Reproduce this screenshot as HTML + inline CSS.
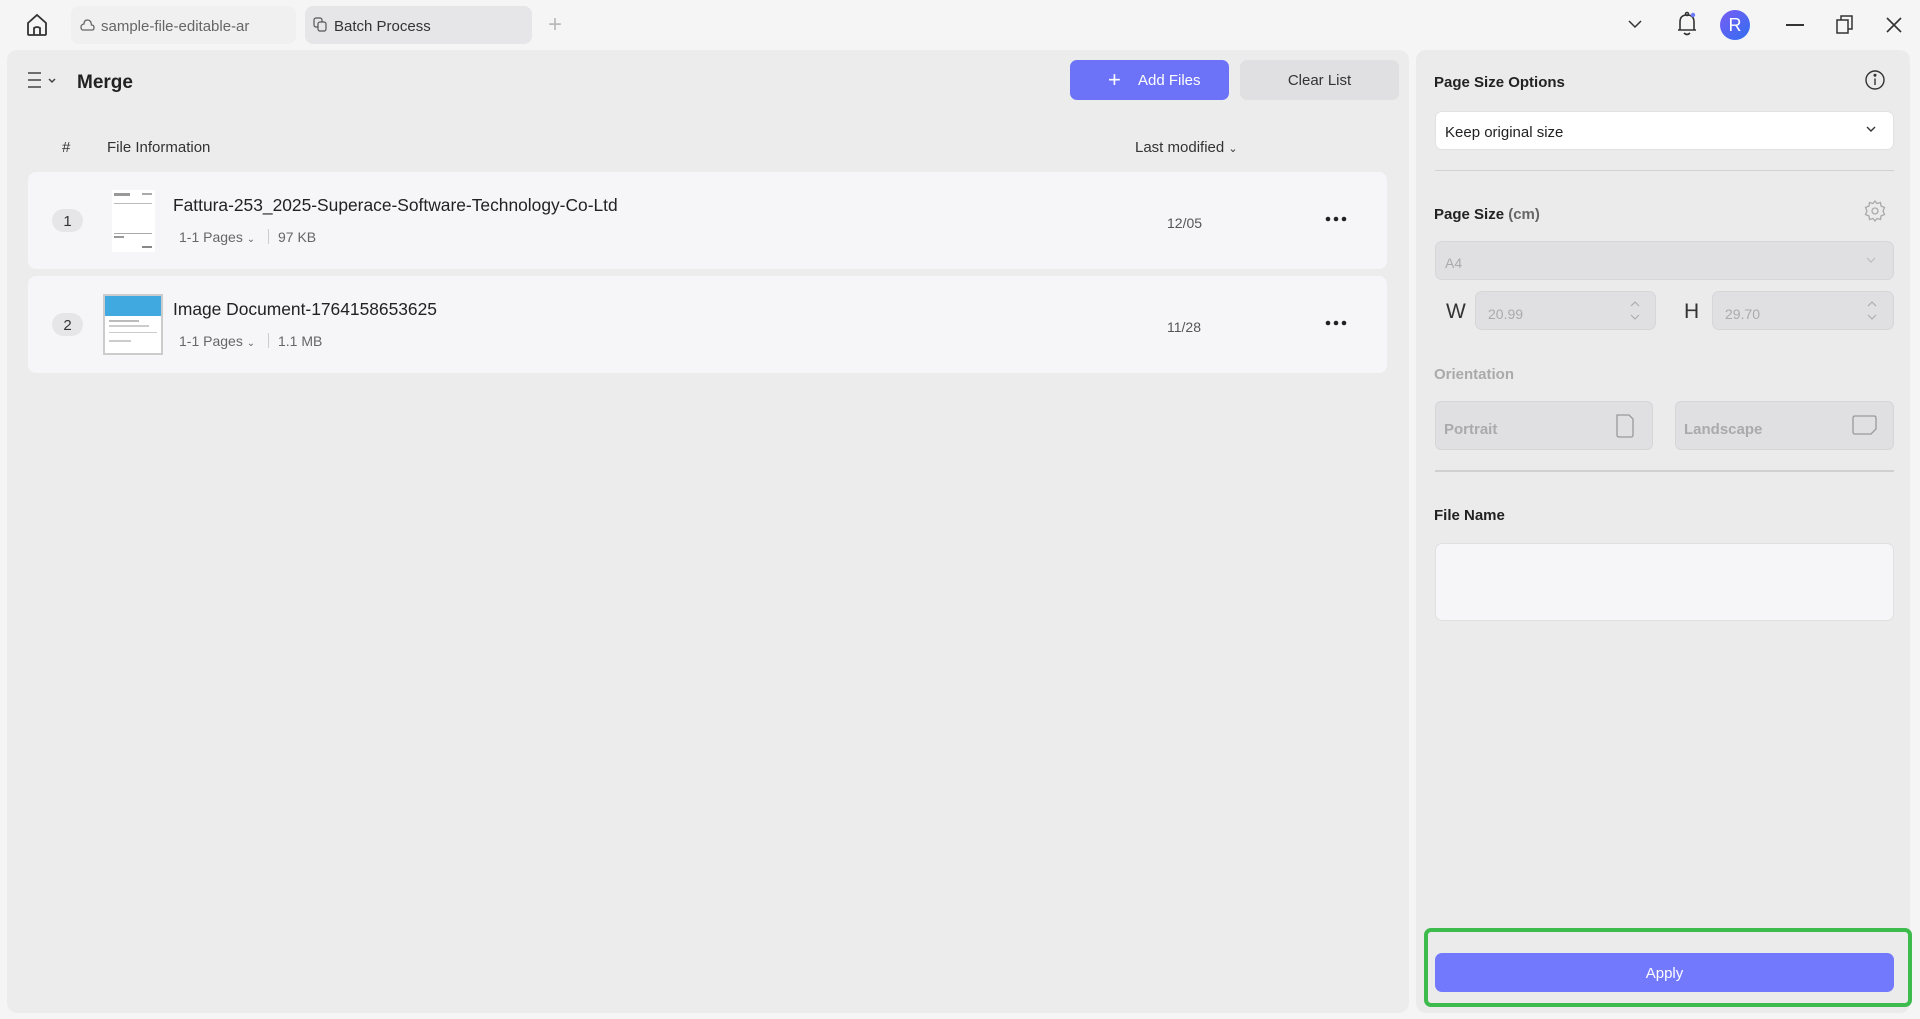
<!DOCTYPE html>
<html><head><meta charset="utf-8"><style>
*{box-sizing:border-box;margin:0;padding:0}
body{width:1920px;height:1019px;background:#f5f5f6;font-family:"Liberation Sans",sans-serif;color:#222;position:relative;overflow:hidden}
.a{position:absolute}
.t{white-space:nowrap;margin-top:2px}
</style></head><body>
<!-- title bar -->
<svg class="a" style="left:24px;top:12px" width="26" height="26" viewBox="0 0 26 26" fill="none" stroke="#333" stroke-width="1.8"><path d="M4 11 L13 3 L22 11 V22 Q22 23 21 23 H5 Q4 23 4 22Z"/><path d="M10 23 V16 Q13 14 16 16 V23"/></svg>
<div class="a" style="left:71px;top:6px;width:225px;height:38px;background:#f0f0f1;border-radius:8px"></div>
<svg class="a" style="left:80px;top:18px" width="15" height="13" viewBox="0 0 15 13" fill="none" stroke="#666" stroke-width="1.3"><path d="M3 12 H12 Q14 12 14 9.5 Q14 7 11.5 7 Q11 2 7.5 2 Q4 2 4 6 Q1 6.5 1 9 Q1 12 3 12Z"/></svg>
<div class="a t" style="left:101px;top:16px;font-size:15px;color:#666">sample-file-editable-ar</div>
<div class="a" style="left:305px;top:6px;width:227px;height:38px;background:#e6e6e8;border-radius:8px"></div>
<svg class="a" style="left:313px;top:17px" width="14" height="15" viewBox="0 0 14 15" fill="none" stroke="#555" stroke-width="1.2"><rect x="1" y="1" width="8" height="9" rx="2"/><rect x="5" y="5" width="8" height="9" rx="2" fill="#e6e6e8"/></svg>
<div class="a t" style="left:334px;top:16px;font-size:15px;color:#333">Batch Process</div>
<div class="a t" style="left:548px;top:9px;font-size:24px;color:#bbb;font-weight:300">+</div>
<svg class="a" style="left:1627px;top:18px" width="16" height="12"><path d="M2 3 L8 9 L14 3" fill="none" stroke="#333" stroke-width="1.5"/></svg>
<svg class="a" style="left:1675px;top:10px" width="24" height="28" viewBox="0 0 24 28" fill="none" stroke="#333" stroke-width="1.6"><path d="M5 20 V12 Q5 5 12 5 Q19 5 19 12 V20 H21 H3Z"/><path d="M9 23 Q12 26 15 23"/><circle cx="12" cy="4" r="1.5"/><circle cx="18" cy="5" r="2.2" fill="#6e7cf8" stroke="none"/></svg>
<div class="a" style="left:1720px;top:10px;width:30px;height:30px;border-radius:50%;background:linear-gradient(135deg,#7a5cf5,#2f6ff0);color:#fff;font-size:18px;text-align:center;line-height:30px">R</div>
<div class="a" style="left:1786px;top:24px;width:18px;height:1.6px;background:#333"></div>
<svg class="a" style="left:1835px;top:14px" width="20" height="22" fill="none" stroke="#333" stroke-width="1.5"><rect x="2" y="6" width="11" height="13"/><path d="M6 6 V2 H17 V15 H13"/></svg>
<svg class="a" style="left:1885px;top:16px" width="18" height="18" stroke="#333" stroke-width="1.6"><path d="M2 2 L16 16 M16 2 L2 16"/></svg>

<!-- left panel -->
<div class="a" style="left:7px;top:50px;width:1402px;height:963px;background:#ececed;border-radius:10px"></div>
<svg class="a" style="left:27px;top:71px" width="34" height="20" fill="none" stroke="#444" stroke-width="1.5"><path d="M1 2 H14 M1 9 H14 M1 16 H14"/><path d="M22 8 L25 11 L28 8"/></svg>
<div class="a t" style="left:77px;top:70px;font-size:19px;font-weight:bold;color:#222">Merge</div>
<div class="a" style="left:1070px;top:60px;width:159px;height:40px;background:#6c73f8;border-radius:7px;color:#fff;font-size:15px;line-height:42px"><span style="position:absolute;left:38px;top:-1px;font-size:22px;font-weight:300">+</span><span style="position:absolute;left:68px">Add Files</span></div>
<div class="a" style="left:1240px;top:60px;width:159px;height:40px;background:#e0e0e2;border-radius:7px;color:#333;font-size:15px;line-height:42px;text-align:center">Clear List</div>
<div class="a t" style="left:62px;top:137px;font-size:15px;color:#333">#</div>
<div class="a t" style="left:107px;top:137px;font-size:15px;color:#333">File Information</div>
<div class="a t" style="left:1135px;top:137px;font-size:15px;color:#333">Last modified <span style="font-size:11px">&#8964;</span></div>

<div class="a" style="left:28px;top:172px;width:1359px;height:97px;background:#f6f6f8;border-radius:8px"></div>
<div class="a" style="left:28px;top:276px;width:1359px;height:97px;background:#f6f6f8;border-radius:8px"></div>
<div class="a" style="left:52px;top:209px;width:31px;height:23px;border-radius:12px;background:#e6e6e8;font-size:15px;text-align:center;line-height:25px;color:#333">1</div>
<div class="a" style="left:52px;top:313px;width:31px;height:23px;border-radius:12px;background:#e6e6e8;font-size:15px;text-align:center;line-height:25px;color:#333">2</div>
<div class="a" style="left:112px;top:190px;width:43px;height:62px;background:#fff">
 <div class="a" style="left:2px;top:3px;width:16px;height:3px;background:#999"></div><div class="a" style="left:30px;top:3px;width:10px;height:2px;background:#aaa"></div>
 <div class="a" style="left:2px;top:13px;width:38px;height:1px;background:#bbb"></div>
 <div class="a" style="left:2px;top:43px;width:38px;height:1px;background:#aaa"></div><div class="a" style="left:2px;top:46px;width:10px;height:2px;background:#999"></div>
 <div class="a" style="left:30px;top:56px;width:10px;height:2px;background:#888"></div></div>
<div class="a" style="left:103px;top:294px;width:60px;height:61px;background:#fff;border:2px solid #ccc">
 <div style="height:20px;background:#3fa9e0"></div>
 <div class="a" style="left:4px;top:24px;width:30px;height:2px;background:#bbb"></div><div class="a" style="left:4px;top:29px;width:40px;height:2px;background:#ccc"></div><div class="a" style="left:4px;top:36px;width:48px;height:1px;background:#ccc"></div><div class="a" style="left:4px;top:44px;width:22px;height:2px;background:#ccc"></div></div>
<div class="a t" style="left:173px;top:193px;font-size:17.4px;color:#222">Fattura-253_2025-Superace-Software-Technology-Co-Ltd</div>
<div class="a t" style="left:179px;top:227px;font-size:14px;color:#666">1-1 Pages <span style="font-size:10px">&#8964;</span></div>
<div class="a" style="left:268px;top:229px;width:1px;height:15px;background:#ccc"></div>
<div class="a t" style="left:278px;top:227px;font-size:14px;color:#666">97 KB</div>
<div class="a t" style="left:173px;top:297px;font-size:17.4px;color:#222">Image Document-1764158653625</div>
<div class="a t" style="left:179px;top:331px;font-size:14px;color:#666">1-1 Pages <span style="font-size:10px">&#8964;</span></div>
<div class="a" style="left:268px;top:333px;width:1px;height:15px;background:#ccc"></div>
<div class="a t" style="left:278px;top:331px;font-size:14px;color:#666">1.1 MB</div>
<div class="a t" style="left:1167px;top:213px;font-size:14px;color:#555">12/05</div>
<div class="a t" style="left:1167px;top:317px;font-size:14px;color:#555">11/28</div>
<svg class="a" style="left:1325px;top:215px" width="22" height="8" fill="#222"><circle cx="3" cy="4" r="2.3"/><circle cx="11" cy="4" r="2.3"/><circle cx="19" cy="4" r="2.3"/></svg>
<svg class="a" style="left:1325px;top:319px" width="22" height="8" fill="#222"><circle cx="3" cy="4" r="2.3"/><circle cx="11" cy="4" r="2.3"/><circle cx="19" cy="4" r="2.3"/></svg>

<!-- right panel -->
<div class="a" style="left:1416px;top:50px;width:494px;height:963px;background:#ebebec;border-radius:10px"></div>
<div class="a t" style="left:1434px;top:72px;font-size:15px;font-weight:bold;color:#222">Page Size Options</div>
<svg class="a" style="left:1864px;top:69px" width="22" height="22" fill="none" stroke="#333" stroke-width="1.4"><circle cx="11" cy="11" r="9"/><path d="M11 9.5 V16"/><circle cx="11" cy="6.3" r="0.8" fill="#333"/></svg>
<div class="a" style="left:1435px;top:111px;width:459px;height:39px;background:#fff;border:1px solid #e2e2e4;border-radius:7px"></div>
<div class="a t" style="left:1445px;top:122px;font-size:15px;color:#222">Keep original size</div>
<svg class="a" style="left:1865px;top:125px" width="12" height="8"><path d="M2 2 L6 6 L10 2" fill="none" stroke="#333" stroke-width="1.4"/></svg>
<div class="a" style="left:1435px;top:170px;width:459px;height:1px;background:#d2d2d4"></div>
<div class="a t" style="left:1434px;top:204px;font-size:15px;font-weight:bold;color:#222">Page Size <span style="color:#666">(cm)</span></div>
<svg class="a" style="left:1863px;top:199px" width="24" height="24" fill="none" stroke="#aaa" stroke-width="1.3"><path d="M12 2 L14 4.5 L17.5 3.5 L18 7 L21.5 8.5 L20 12 L21.5 15.5 L18 17 L17.5 20.5 L14 19.5 L12 22 L10 19.5 L6.5 20.5 L6 17 L2.5 15.5 L4 12 L2.5 8.5 L6 7 L6.5 3.5 L10 4.5Z"/><circle cx="12" cy="12" r="3"/></svg>
<div class="a" style="left:1435px;top:241px;width:459px;height:39px;background:#e0e0e2;border:1px solid #d6d6d8;border-radius:7px"></div>
<div class="a t" style="left:1445px;top:253px;font-size:14px;color:#aaa">A4</div>
<svg class="a" style="left:1866px;top:257px" width="10" height="7"><path d="M1 1 L5 5 L9 1" fill="none" stroke="#bbb" stroke-width="1.2"/></svg>
<div class="a t" style="left:1446px;top:298px;font-size:21px;color:#333">W</div>
<div class="a" style="left:1475px;top:291px;width:181px;height:39px;background:#e0e0e2;border:1px solid #d6d6d8;border-radius:7px"></div>
<div class="a t" style="left:1488px;top:304px;font-size:14px;color:#aaa">20.99</div>
<svg class="a" style="left:1630px;top:301px" width="10" height="20" fill="none" stroke="#aaa" stroke-width="1.1"><path d="M1 5 L5 1 L9 5 M1 14 L5 18 L9 14"/></svg>
<div class="a t" style="left:1684px;top:298px;font-size:21px;color:#333">H</div>
<div class="a" style="left:1712px;top:291px;width:182px;height:39px;background:#e0e0e2;border:1px solid #d6d6d8;border-radius:7px"></div>
<div class="a t" style="left:1725px;top:304px;font-size:14px;color:#aaa">29.70</div>
<svg class="a" style="left:1867px;top:301px" width="10" height="20" fill="none" stroke="#aaa" stroke-width="1.1"><path d="M1 5 L5 1 L9 5 M1 14 L5 18 L9 14"/></svg>
<div class="a t" style="left:1434px;top:364px;font-size:15px;font-weight:bold;color:#aaa">Orientation</div>
<div class="a" style="left:1435px;top:401px;width:218px;height:49px;background:#e0e0e2;border:1px solid #d6d6d8;border-radius:6px"></div>
<div class="a t" style="left:1444px;top:419px;font-size:15px;font-weight:bold;color:#aaa">Portrait</div>
<svg class="a" style="left:1614px;top:413px" width="22" height="26" fill="none" stroke="#999" stroke-width="1.3"><path d="M3 2 H15 L19 6 V22 Q19 24 17 24 H5 Q3 24 3 22Z"/></svg>
<div class="a" style="left:1675px;top:401px;width:219px;height:49px;background:#e0e0e2;border:1px solid #d6d6d8;border-radius:6px"></div>
<div class="a t" style="left:1684px;top:419px;font-size:15px;font-weight:bold;color:#aaa">Landscape</div>
<svg class="a" style="left:1851px;top:414px" width="28" height="22" fill="none" stroke="#999" stroke-width="1.3"><path d="M3 2 H23 Q25 2 25 4 V15 L20 20 H4 Q2 20 2 18 V4 Q2 2 4 2Z"/></svg>
<div class="a" style="left:1435px;top:470px;width:459px;height:2px;background:#d0d0d2"></div>
<div class="a t" style="left:1434px;top:505px;font-size:15px;font-weight:bold;color:#222">File Name</div>
<div class="a" style="left:1435px;top:543px;width:459px;height:78px;background:#f6f6f8;border:1px solid #e0e0e2;border-radius:7px"></div>
<div class="a" style="left:1424px;top:928px;width:488px;height:79px;border:4px solid #3dbb4c;border-radius:7px"></div>
<div class="a" style="left:1435px;top:953px;width:459px;height:39px;background:#7379fd;border-radius:7px;color:#fff;font-size:15px;text-align:center;line-height:41px">Apply</div>
</body></html>
